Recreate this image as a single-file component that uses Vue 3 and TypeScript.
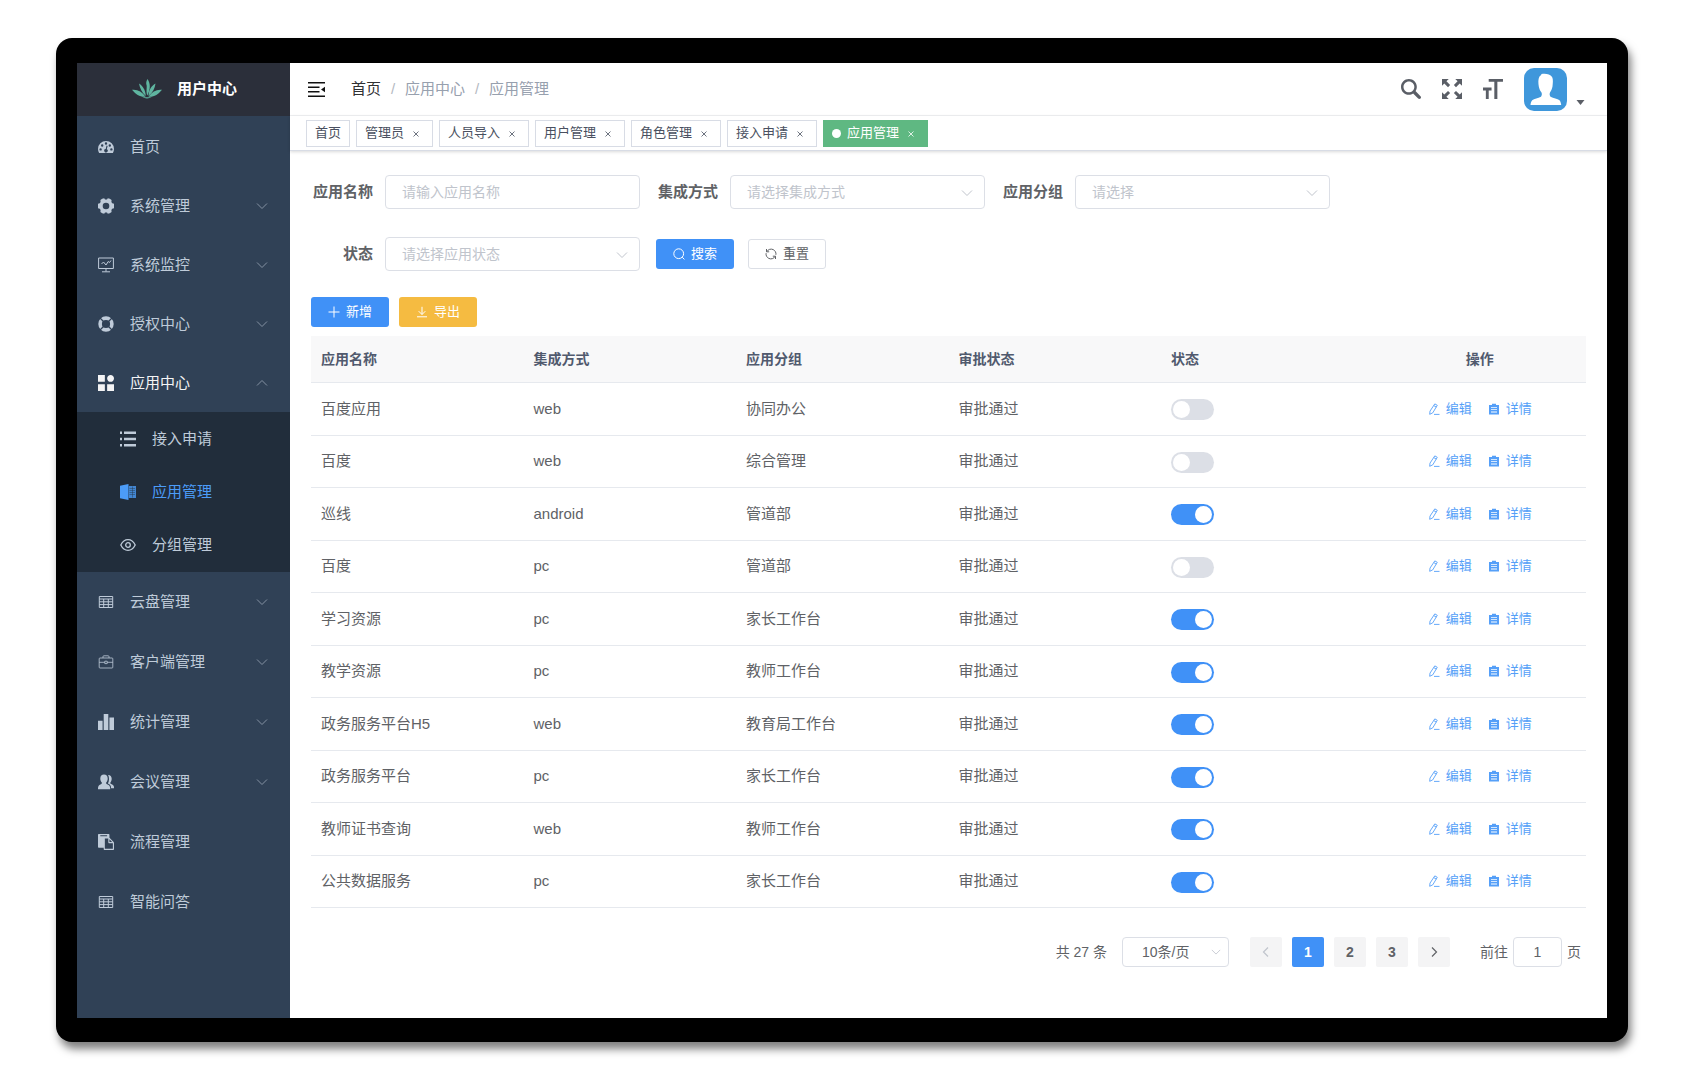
<script setup lang="ts">
import { ref } from 'vue'

interface MenuItem {
  label: string
  icon: string
  arrow?: boolean
  children?: { label: string; icon: string; active?: boolean }[]
}

interface AppRow {
  name: string
  mode: string
  group: string
  audit: string
  enabled: boolean
}

const menu: MenuItem[] = [
  { label: '首页', icon: 'dashboard' },
  { label: '系统管理', icon: 'gear', arrow: true },
  { label: '系统监控', icon: 'monitor', arrow: true },
  { label: '授权中心', icon: 'ring', arrow: true },
  {
    label: '应用中心',
    icon: 'component',
    arrow: true,
    children: [
      { label: '接入申请', icon: 'list' },
      { label: '应用管理', icon: 'book', active: true },
      { label: '分组管理', icon: 'eye' },
    ],
  },
  { label: '云盘管理', icon: 'table', arrow: true },
  { label: '客户端管理', icon: 'case', arrow: true },
  { label: '统计管理', icon: 'chart', arrow: true },
  { label: '会议管理', icon: 'peoples', arrow: true },
  { label: '流程管理', icon: 'clipboard' },
  { label: '智能问答', icon: 'table' },
]

const icons: Record<string, { box: string; body: string }> = {
  dashboard: {
    box: '0 0 16 16',
    body: '<path fill="currentColor" fill-rule="evenodd" d="M8 2a8 8 0 0 0-8 8c0 1.500.4 2.800 1.100 4h13.800c.7-1.200 1.100-2.500 1.100-4a8 8 0 0 0-8-8zM2.600 9.200a1.200 1.200 0 1 1 0 2.400 1.200 1.200 0 0 1 0-2.400zM4.200 5.300a1.200 1.200 0 1 1 0 2.400 1.200 1.200 0 0 1 0-2.400zM8 3.300a1.200 1.200 0 1 1 0 2.400 1.200 1.200 0 0 1 0-2.400zM11.800 5.300a1.200 1.200 0 1 1 0 2.400 1.200 1.200 0 0 1 0-2.400zM13.400 9.200a1.200 1.200 0 1 1 0 2.400 1.200 1.200 0 0 1 0-2.400zM8.600 6.600l1 .3-.8 3.300a1.700 1.700 0 1 1-1.100-.2z"/>',
  },
  gear: {
    box: '0 0 16 16',
    body: '<path fill="currentColor" fill-rule="evenodd" d="M4.200.7 6.200.2 7 1.400h2L9.800.2l2 .5 1.800 1.200-.2 2 .8 1.300 1.800.5v4.600l-1.800.5-.8 1.300.2 2-1.800 1.200-2 .5L9 14.600H7l-.8 1.200-2-.5-1.800-1.200.2-2-.8-1.300L0 10.300V5.700l1.800-.5.8-1.300-.2-2zM8 4.700a3.300 3.300 0 1 0 0 6.600 3.300 3.300 0 0 0 0-6.600z"/>',
  },
  monitor: {
    box: '0 0 16 16',
    body: '<path fill="none" stroke="currentColor" d="M.6 1h14.800v10.500H.6zM8 11.500v3M4 14.800h8M3.500 7l2-2 2.500 3 2.200-3.500 1.300 1L13 3.500"/>',
  },
  ring: {
    box: '0 0 16 16',
    body: '<circle cx="8" cy="8" r="5.900" fill="none" stroke="currentColor" stroke-width="3.600"/><path stroke="#304156" stroke-width="1.300" d="M1 1l5 5M15 1l-5 5M1 15l5-5M15 15l-5-5"/>',
  },
  component: {
    box: '0 0 128 128',
    body: '<path fill="currentColor" d="M0 0h54.857v54.857H0V0zm0 73.143h54.857V128H0V73.143zm73.143 0H128V128H73.143V73.143zm27.428-18.286C115.720 54.857 128 42.577 128 27.430 128 12.280 115.720 0 100.571 0 85.423 0 73.143 12.280 73.143 27.429c0 15.148 12.280 27.428 27.428 27.428z"/>',
  },
  list: {
    box: '0 0 16 16',
    body: '<path stroke="currentColor" stroke-width="2.600" d="M4 1.800h12M4 8h12M4 14.200h12"/><path stroke="currentColor" stroke-width="2.400" d="M0 1.800h2M0 8h2M0 14.200h2"/>',
  },
  book: {
    box: '0 0 16 16',
    body: '<path fill="currentColor" d="M0 1.800 8.500 0v16L0 14.200z"/><path fill="currentColor" opacity=".8" d="M8.900 2H16v12H8.900z"/><path stroke="#212d3b" stroke-width=".4" d="M9.500 4.500H15M9.500 6.500H15M9.500 8.500H15M9.500 10.500H15M12.500 2.500v11"/>',
  },
  eye: {
    box: '0 0 16 16',
    body: '<path fill="none" stroke="currentColor" stroke-width="1.300" d="M.8 8C2.500 4.500 5 2.700 8 2.700S13.500 4.500 15.200 8c-1.700 3.500-4.200 5.300-7.200 5.300S2.500 11.500.8 8z"/><circle cx="8" cy="8" r="2.300" fill="none" stroke="currentColor" stroke-width="1.300"/>',
  },
  table: {
    box: '0 0 16 16',
    body: '<path fill="none" stroke="currentColor" stroke-width="1" d="M1.300 2.500h13.400v11H1.300zM1.300 5h13.400M1.300 7.800h13.400M1.300 10.600h13.400M5.700 5v8.500M10.300 5v8.500"/>',
  },
  case: {
    box: '0 0 16 16',
    body: '<path fill="none" stroke="currentColor" stroke-width=".8" d="M2 4h12q.8 0 .8.8v8.400q0 .8-.8.800H2q-.8 0-.8-.8V4.800Q1.200 4 2 4zM5 4V2.600q0-.8.800-.8h4.400q.8 0 .8.800V4M1.200 8.300h5.600M9.200 8.300h5.600M6.800 7.200h2.400v2.400H6.800z"/>',
  },
  chart: {
    box: '0 0 128 128',
    body: '<path fill="currentColor" d="M0 54.857h36.571V128H0V54.857zM91.429 27.430H128V128H91.429V27.429zM45.714 0h36.572v128H45.714V0z"/>',
  },
  peoples: {
    box: '0 0 16 16',
    body: '<path fill="currentColor" d="M6 .4c2.300 0 3.700 1.600 3.700 4 0 1.700-.6 3.200-1.500 4.200-.3.800 0 1.300.8 1.600 1.800.7 3.200 1.700 3.200 3.800v1.300H0V14c0-2.100 1.400-3.100 3-3.800.8-.3 1.100-.8.8-1.600-.9-1-1.500-2.500-1.500-4.200 0-2.400 1.400-4 3.700-4z"/><path fill="currentColor" d="M10 1c2.100-.2 3.700 1.400 3.700 3.700 0 1.500-.5 2.800-1.300 3.700-.2.800 0 1.200.7 1.500 1.600.6 2.900 1.500 2.900 3.300v1h-2.900c0-2.300-1-3.800-3.200-4.700.7-1.200 1.100-2.700 1.100-4.300 0-1.700-.3-3.200-1-4.200z"/>',
  },
  clipboard: {
    box: '0 0 128 128',
    body: '<path fill="currentColor" d="M54.857 118.857h64V73.143H89.143c-1.902 0-3.520-.668-4.855-2.002-1.335-1.335-2.002-2.954-2.002-4.855V36.570H54.857v82.286zM73.143 16v-4.571a2.200 2.200 0 0 0-.677-1.610 2.198 2.198 0 0 0-1.609-.676H20.571c-.621 0-1.158.225-1.609.676a2.198 2.198 0 0 0-.676 1.610V16a2.200 2.200 0 0 0 .676 1.610c.451.450.988.676 1.610.676h50.285c.622 0 1.158-.226 1.610-.677.450-.450.676-.987.676-1.609zm18.286 48h21.357L91.430 42.642V64zM128 73.143v48c0 1.902-.667 3.520-2.002 4.855-1.335 1.335-2.953 2.002-4.855 2.002H52.570c-1.901 0-3.520-.667-4.854-2.002-1.335-1.335-2.003-2.953-2.003-4.855v-11.429H6.857c-1.902 0-3.520-.667-4.855-2.002C.667 106.377 0 104.759 0 102.857v-96c0-1.902.667-3.520 2.002-4.855C3.337.667 4.955 0 6.857 0h77.714c1.902 0 3.520.667 4.855 2.002 1.335 1.335 2.003 2.953 2.003 4.855V30.290c1 .622 1.856 1.290 2.569 2.003l29.147 29.147c1.335 1.335 2.478 3.145 3.429 5.430.950 2.287 1.426 4.383 1.426 6.291z"/>',
  },
}

const tags = [
  { label: '首页', closable: false, active: false },
  { label: '管理员', closable: true, active: false },
  { label: '人员导入', closable: true, active: false },
  { label: '用户管理', closable: true, active: false },
  { label: '角色管理', closable: true, active: false },
  { label: '接入申请', closable: true, active: false },
  { label: '应用管理', closable: true, active: true },
]

const filters = [
  { id: 'app-name', label: '应用名称', hint: '请输入应用名称', type: 'input' },
  { id: 'app-mode', label: '集成方式', hint: '请选择集成方式', type: 'select' },
  { id: 'app-group', label: '应用分组', hint: '请选择', type: 'select' },
  { id: 'app-state', label: '状态', hint: '请选择应用状态', type: 'select' },
]

const row = (name: string, mode: string, group: string, enabled: boolean): AppRow => ({
  name,
  mode,
  group,
  audit: '审批通过',
  enabled,
})

const rows = ref<AppRow[]>([
  row('百度应用', 'web', '协同办公', false),
  row('百度', 'web', '综合管理', false),
  row('巡线', 'android', '管道部', true),
  row('百度', 'pc', '管道部', false),
  row('学习资源', 'pc', '家长工作台', true),
  row('教学资源', 'pc', '教师工作台', true),
  row('政务服务平台H5', 'web', '教育局工作台', true),
  row('政务服务平台', 'pc', '家长工作台', true),
  row('教师证书查询', 'web', '教师工作台', true),
  row('公共数据服务', 'pc', '家长工作台', true),
])

const page = ref(1)
const jump = ref('1')
</script>

<template>
  <div class="device">
    <aside class="sidebar">
      <a class="logo" href="#">
        <svg class="logo-mark" viewBox="0 0 30 20" aria-hidden="true">
          <g fill="#5fb5a0">
            <path d="M15.500 0c3 4.500 3.200 10-.1 16.500C13.600 12 15.500 8 14.300 5.200c-.3-1.700.3-3.700 1.200-5.200z" />
            <path d="M7 4.500c4 2.500 6.300 6.500 6.800 12.500C9.800 13.500 8 9.500 7 4.500z" />
            <path d="M23.500 4.500c-.6 5-2.700 9-7 12.500.3-6 2.500-10 7-12.500z" />
            <path d="M0 10.800c5.500-.6 10 1.700 13.600 7C8 18.300 4 15.500 0 10.800z" />
            <path d="M30 10.800c-4 4.700-8 7.500-13.600 7 3.600-5.300 8.100-7.600 13.600-7z" />
            <path d="M10 17.800q5 1 10 0-5 3.500-10 0z" />
          </g>
        </svg>
        <span>用户中心</span>
      </a>
      <nav>
        <ul class="menu">
          <li v-for="item in menu" :key="item.label" :class="{ open: item.children }">
            <a class="menu-item" href="#">
              <svg class="menu-icon" :viewBox="icons[item.icon].box" aria-hidden="true" v-html="icons[item.icon].body" />
              <span>{{ item.label }}</span>
              <svg v-if="item.arrow" class="menu-arrow" viewBox="0 0 12 12" aria-hidden="true">
                <path d="M1 3.500l5 5 5-5" />
              </svg>
            </a>
            <ul v-if="item.children" class="submenu">
              <li v-for="sub in item.children" :key="sub.label">
                <a class="submenu-item" :class="{ active: sub.active }" href="#">
                  <svg class="menu-icon" :viewBox="icons[sub.icon].box" aria-hidden="true" v-html="icons[sub.icon].body" />
                  <span>{{ sub.label }}</span>
                </a>
              </li>
            </ul>
          </li>
        </ul>
      </nav>
    </aside>

    <div class="main">
      <header class="navbar">
        <button class="fold" type="button" aria-label="收起菜单">
          <svg viewBox="0 0 17 15" aria-hidden="true">
            <path fill="none" stroke="#111" stroke-width="1.400" d="M0 .8h17M0 5.300h11.500M0 9.700h11.500M0 14.200h17" />
            <path fill="#111" d="M17 4.800v5.400l-4-2.700z" />
          </svg>
        </button>
        <nav class="crumbs">
          <a class="first" href="#">首页</a>
          <i>/</i>
          <span>应用中心</span>
          <i>/</i>
          <span>应用管理</span>
        </nav>
        <div class="tools">
          <button type="button" aria-label="搜索">
            <svg viewBox="0 0 128 128" aria-hidden="true">
              <path d="M124.884 109.812L94.256 79.166c-.357-.357-.757-.629-1.129-.914a50.366 50.366 0 0 0 8.186-27.590C101.327 22.689 78.656 0 50.670 0 22.685 0 0 22.688 0 50.663c0 27.989 22.685 50.663 50.656 50.663 10.186 0 19.643-3.030 27.600-8.201.286.385.557.771.9 1.114l30.628 30.632a10.633 10.633 0 0 0 7.543 3.129c2.728 0 5.457-1.043 7.543-3.115 4.171-4.157 4.171-10.915.014-15.073M50.671 85.338C31.557 85.338 16 69.780 16 50.663c0-19.102 15.557-34.661 34.670-34.661 19.115 0 34.657 15.559 34.657 34.675 0 19.102-15.557 34.661-34.656 34.661" />
            </svg>
          </button>
          <button type="button" aria-label="全屏">
            <svg viewBox="0 0 128 128" aria-hidden="true">
              <path d="M38.470 52L52 38.462l-23.648-23.670L43.209 0H.035L0 43.137l14.757-14.865L38.470 52zm74.773 47.726L89.526 76 76 89.536l23.648 23.672L84.795 128h43.174L128 84.863l-14.757 14.863zM89.538 52l23.668-23.648L128 43.207V.038L84.866 0 99.730 14.760 76 38.472 89.538 52zM38.460 76L14.792 99.651 0 84.794v43.173l43.137.033-14.865-14.757L52 89.530 38.460 76z" />
            </svg>
          </button>
          <button type="button" aria-label="字号">
            <svg viewBox="0 0 128 128" aria-hidden="true">
              <path d="M0 54.857h54.796v18.286H36.531V128H18.265V73.143H0V54.857zm127.857-36.571H91.935V128H72.456V18.286H36.534V0h91.326l-.003 18.286z" />
            </svg>
          </button>
          <button class="user" type="button" aria-label="账户">
            <svg class="avatar" viewBox="0 0 43 43" aria-hidden="true">
              <rect width="43" height="43" rx="10" fill="#3f97db" />
              <path fill="#fff" d="M17.500 6c4-.8 8.500 0 10.600 3 1.300 2.500.7 6.500.4 9.500-.5 2.500-1.500 4.500-2.500 6-.7 1.500-.3 3.200.5 4.200 3 1.600 6.900 1.800 9 3.600 1.100 1.200 1.500 2.900 1.700 4.700H6.500c.1-1.800.6-3.500 1.700-4.700 2.100-1.800 5.800-2 8.800-3.600.8-1 1.200-2.700.5-4.200-1.200-1.500-2.200-3.500-2.700-6-.5-3.500-.9-7 .7-10 .6-.9 1.600-.8 2-2.500z" />
            </svg>
            <svg class="caret" viewBox="0 0 8 5" aria-hidden="true"><path d="M0 0h8L4 5z" /></svg>
          </button>
        </div>
      </header>

      <div class="tags">
        <span v-for="tag in tags" :key="tag.label" class="tag" :class="{ active: tag.active }">
          <i v-if="tag.active" class="dot"></i>
          <a href="#">{{ tag.label }}</a>
          <button v-if="tag.closable" type="button" aria-label="关闭">
            <svg viewBox="0 0 6 6" aria-hidden="true"><path d="M.5.5l5 5M5.500.5l-5 5" /></svg>
          </button>
        </span>
      </div>

      <main class="content">
        <form class="filters" @submit.prevent>
          <div v-for="f in filters" :key="f.id" class="field">
            <label :for="f.id">{{ f.label }}</label>
            <div class="control">
              <input v-if="f.type === 'input'" :id="f.id" type="text" :placeholder="f.hint" />
              <template v-else>
                <select :id="f.id">
                  <option value="">{{ f.hint }}</option>
                </select>
                <svg class="chevron" viewBox="0 0 12 12" aria-hidden="true"><path d="M1 3.500l5 5 5-5" /></svg>
              </template>
            </div>
          </div>
          <div class="submit">
            <button class="btn primary" type="submit">
              <svg viewBox="0 0 12 12" aria-hidden="true">
                <circle cx="5.700" cy="5.700" r="4.900" /><path d="M9.200 9.200l2.200 2.200" />
              </svg>
              <span>搜索</span>
            </button>
            <button class="btn plain" type="reset">
              <svg viewBox="0 0 12 12" aria-hidden="true">
                <path d="M1.500 1v2.800h2.700M1.800 3.600C3.200 1.300 6 .5 8.200 1.600c2 1 3.100 3 2.700 5.200M10.500 11V8.200H7.800M10.200 8.400C8.800 10.700 6 11.500 3.800 10.400c-2-1-3.100-3-2.700-5.200" />
              </svg>
              <span>重置</span>
            </button>
          </div>
        </form>

        <div class="toolbar">
          <button class="btn primary" type="button">
            <svg viewBox="0 0 12 12" aria-hidden="true"><path d="M6 .5v11M.5 6h11" /></svg>
            <span>新增</span>
          </button>
          <button class="btn warning" type="button">
            <svg viewBox="0 0 12 12" aria-hidden="true"><path d="M6 .8v7.700M2.700 5.200L6 8.500l3.300-3.300M1 10.800h10" /></svg>
            <span>导出</span>
          </button>
        </div>

        <table class="grid">
          <thead>
            <tr>
              <th>应用名称</th>
              <th>集成方式</th>
              <th>应用分组</th>
              <th>审批状态</th>
              <th>状态</th>
              <th class="center">操作</th>
            </tr>
          </thead>
          <tbody>
            <tr v-for="(r, i) in rows" :key="i">
              <td>{{ r.name }}</td>
              <td>{{ r.mode }}</td>
              <td>{{ r.group }}</td>
              <td>{{ r.audit }}</td>
              <td>
                <input v-model="r.enabled" class="switch" type="checkbox" role="switch" :aria-label="r.name + '状态'" />
              </td>
              <td>
                <div class="ops">
                  <button type="button">
                    <svg viewBox="0 0 12 12" aria-hidden="true">
                      <path fill="none" stroke="currentColor" stroke-width=".9" d="M6.800.9l2.500 1.400-4.600 7.600-3 1.400.3-3.200zM5.800 2.600l2.500 1.500M6 11.400h5.500" />
                    </svg>
                    <span>编辑</span>
                  </button>
                  <button type="button">
                    <svg viewBox="0 0 12 12" aria-hidden="true">
                      <path fill="currentColor" fill-rule="evenodd" d="M4 .8h4v1.200h3v9.500H1V2h3zM3 4v.8h6V4zM3 6.300v.8h6v-.8zM3 8.600v.8h6v-.8z" />
                    </svg>
                    <span>详情</span>
                  </button>
                </div>
              </td>
            </tr>
          </tbody>
        </table>

        <div class="pager">
          <span class="total">共 27 条</span>
          <div class="control size">
            <select aria-label="每页条数">
              <option>10条/页</option>
            </select>
            <svg class="chevron" viewBox="0 0 12 12" aria-hidden="true"><path d="M1 3.500l5 5 5-5" /></svg>
          </div>
          <div class="pages">
            <button type="button" aria-label="上一页" disabled>
              <svg viewBox="0 0 12 12" aria-hidden="true"><path d="M8 1.500L3.500 6 8 10.500" /></svg>
            </button>
            <button v-for="n in 3" :key="n" type="button" :class="{ current: n === page }" @click="page = n">{{ n }}</button>
            <button type="button" aria-label="下一页">
              <svg viewBox="0 0 12 12" aria-hidden="true"><path d="M4 1.500L8.500 6 4 10.500" /></svg>
            </button>
          </div>
          <label class="jump">
            <span>前往</span>
            <input v-model="jump" type="text" />
            <span>页</span>
          </label>
        </div>
      </main>
    </div>
  </div>
</template>

<style>
body {
  margin: 0;
  background: #fff;
}
</style>

<style scoped>
.device,
.device * {
  box-sizing: border-box;
}
.device {
  display: flex;
  margin: 38px 56px;
  padding: 25px 21px 24px;
  min-height: calc(100vh - 76px);
  border-radius: 16px;
  background: #000;
  box-shadow: 3px 7px 9px rgba(0, 0, 0, 0.5);
  color: #606266;
  font-family: "Liberation Sans", "Noto Sans CJK SC", sans-serif;
  font-size: 15px;
  line-height: 20px;
}
a {
  color: inherit;
  text-decoration: none;
}
button,
input,
select {
  margin: 0;
  font-family: inherit;
  line-height: 20px;
}
button {
  padding: 0;
  border: 0;
  background: none;
  color: inherit;
  cursor: pointer;
}
svg {
  display: block;
  flex: none;
}
i {
  font-style: normal;
}

/* sidebar */
.sidebar {
  flex: none;
  width: 213px;
  background: #304156;
  color: #bfcbd9;
}
.logo {
  display: flex;
  align-items: center;
  justify-content: center;
  gap: 15px;
  height: 53px;
  padding: 0 0 2px 2px;
  background: #2b2f3a;
  color: #fff;
  font-weight: 700;
}
.logo-mark {
  width: 30px;
  height: 20px;
}
.menu,
.submenu {
  margin: 0;
  padding: 0;
  list-style: none;
}
.menu {
  padding-top: 1px;
}
.menu-item {
  display: flex;
  align-items: center;
  height: 59px;
  padding: 0 22px 0 21px;
}
.open ~ li .menu-item {
  height: 60px;
}
.menu-icon {
  width: 16px;
  height: 16px;
  margin-right: 16px;
}
.menu-arrow {
  width: 12px;
  height: 12px;
  margin-left: auto;
  fill: none;
  stroke: #8592a3;
}
.open > .menu-item {
  color: #f4f4f5;
}
.open .menu-arrow {
  transform: rotate(180deg);
}
.submenu {
  padding-bottom: 1px;
  background: #212d3b;
}
.submenu-item {
  display: flex;
  align-items: center;
  height: 53px;
  padding-left: 43px;
}
.submenu-item.active {
  color: #4c9cf8;
}

/* top bar */
.main {
  flex: 1;
  min-width: 0;
  background: #fff;
}
.navbar {
  display: flex;
  align-items: center;
  height: 53px;
  padding: 0 22px 0 18px;
  border-bottom: 1px solid #f0f1f3;
}
.fold svg {
  width: 17px;
  height: 15px;
}
.crumbs {
  display: flex;
  gap: 10px;
  margin-left: 26px;
}
.crumbs .first {
  color: #303133;
}
.crumbs i {
  width: 4px;
  color: #b4b9c2;
}
.crumbs span {
  color: #97a0ae;
}
.tools {
  display: flex;
  align-items: center;
  gap: 21px;
  margin-left: auto;
  color: #5a5e66;
}
.tools svg {
  width: 20px;
  height: 20px;
  fill: currentColor;
}
.tools .user {
  display: flex;
  align-items: flex-end;
  gap: 9px;
}
.tools .avatar {
  width: 43px;
  height: 43px;
}
.tools .caret {
  width: 9px;
  height: 5px;
  margin-bottom: 6px;
}

/* visited tabs */
.tags {
  display: flex;
  align-items: center;
  gap: 6px;
  height: 35px;
  padding: 0 16px;
  border-bottom: 1px solid #d8dce5;
  box-shadow: 0 1px 3px rgba(0, 0, 0, 0.15);
}
.tag {
  display: flex;
  align-items: center;
  height: 27px;
  padding: 0 8px;
  border: 1px solid #d8dce5;
  color: #495060;
  font-size: 13px;
}
.tag button {
  width: 17px;
  margin-left: 3px;
}
.tag button svg {
  width: 6px;
  height: 6px;
  margin: 2px auto 0;
  fill: none;
  stroke: currentColor;
  stroke-width: 0.8px;
}
.tag.active {
  border-color: #5fb882;
  background: #5fb882;
  color: #fff;
}
.dot {
  width: 9px;
  height: 9px;
  margin-right: 6px;
  border-radius: 50%;
  background: #fff;
}

/* search form */
.content {
  padding: 24px 21px;
}
.filters {
  display: flex;
  flex-wrap: wrap;
  row-gap: 28px;
  max-width: 1100px;
}
.field {
  display: flex;
  align-items: center;
  margin-right: 16px;
}
.field label {
  width: 74px;
  padding-right: 12px;
  text-align: right;
  font-weight: 700;
}
.control {
  position: relative;
  width: 255px;
}
.control input,
.control select {
  display: block;
  width: 100%;
  height: 34px;
  padding: 0 16px;
  border: 1px solid #dcdfe6;
  border-radius: 4px;
  outline: 0;
  appearance: none;
  background: #fff;
  color: #c0c4cc;
  font-size: 14px;
}
.control input::placeholder {
  color: #c0c4cc;
}
.chevron {
  position: absolute;
  top: 50%;
  right: 12px;
  width: 12px;
  height: 12px;
  margin-top: -5px;
  fill: none;
  stroke: #c0c4cc;
  pointer-events: none;
}
.submit {
  display: flex;
  align-items: center;
  gap: 14px;
}
.btn {
  display: flex;
  align-items: center;
  gap: 6px;
  height: 30px;
  padding: 0 16px;
  border: 1px solid transparent;
  border-radius: 3px;
  color: #fff;
  font-size: 13px;
}
.btn svg {
  width: 12px;
  height: 12px;
  fill: none;
  stroke: currentColor;
  stroke-width: 1px;
}
.btn.primary {
  background: #4091f7;
}
.btn.warning {
  background: #f5bb41;
}
.btn.plain {
  border-color: #dcdfe6;
  background: #fff;
  color: #606266;
}
.toolbar {
  display: flex;
  gap: 10px;
  margin: 26px 0 9px;
}

/* data table */
.grid {
  width: 100%;
  border-collapse: collapse;
  table-layout: fixed;
}
.grid th,
.grid td {
  height: 53px;
  padding: 0 10px;
  border-bottom: 1px solid #e6e9ee;
  text-align: left;
}
.grid tr:nth-child(even) td {
  height: 52px;
}
.grid th {
  height: 46px;
  background: #f8f8f9;
  color: #515a6e;
  font-size: 14px;
  font-weight: 700;
}
.grid .center {
  text-align: center;
}
.switch {
  display: block;
  width: 43px;
  height: 21px;
  margin: 2px 0 0;
  border-radius: 11px;
  appearance: none;
  background: #dcdfe6;
  cursor: pointer;
}
.switch::before {
  content: "";
  display: block;
  width: 17px;
  height: 17px;
  margin: 2px;
  border-radius: 50%;
  background: #fff;
}
.switch:checked {
  background: #4091f7;
}
.switch:checked::before {
  margin-left: 24px;
}
.ops {
  display: flex;
  justify-content: center;
  gap: 16px;
  color: #559ff8;
}
.ops button {
  display: flex;
  align-items: center;
  gap: 6px;
  font-size: 13px;
}
.ops svg {
  width: 12px;
  height: 12px;
}

/* pagination */
.pager {
  display: flex;
  align-items: center;
  justify-content: flex-end;
  margin-top: 29px;
  padding-right: 5px;
  font-size: 14px;
}
.size {
  width: 107px;
  margin: 0 21px 0 15px;
}
.control.size select {
  height: 30px;
  padding-left: 19px;
  color: #606266;
}
.size .chevron {
  width: 10px;
  height: 10px;
  right: 8px;
}
.pages {
  display: flex;
  gap: 10px;
}
.pages button {
  display: flex;
  align-items: center;
  justify-content: center;
  width: 32px;
  height: 30px;
  border-radius: 2px;
  background: #f4f4f5;
  color: #606266;
  font-size: 14px;
  font-weight: 700;
}
.pages button:disabled {
  color: #c0c4cc;
}
.pages .current {
  background: #4091f7;
  color: #fff;
}
.pages svg {
  width: 12px;
  height: 12px;
  fill: none;
  stroke: currentColor;
  stroke-width: 1.2px;
}
.jump {
  display: flex;
  align-items: center;
  gap: 5px;
  margin-left: 30px;
}
.jump input {
  width: 49px;
  height: 30px;
  border: 1px solid #dcdfe6;
  border-radius: 4px;
  color: #606266;
  font-size: 14px;
  text-align: center;
}
</style>
